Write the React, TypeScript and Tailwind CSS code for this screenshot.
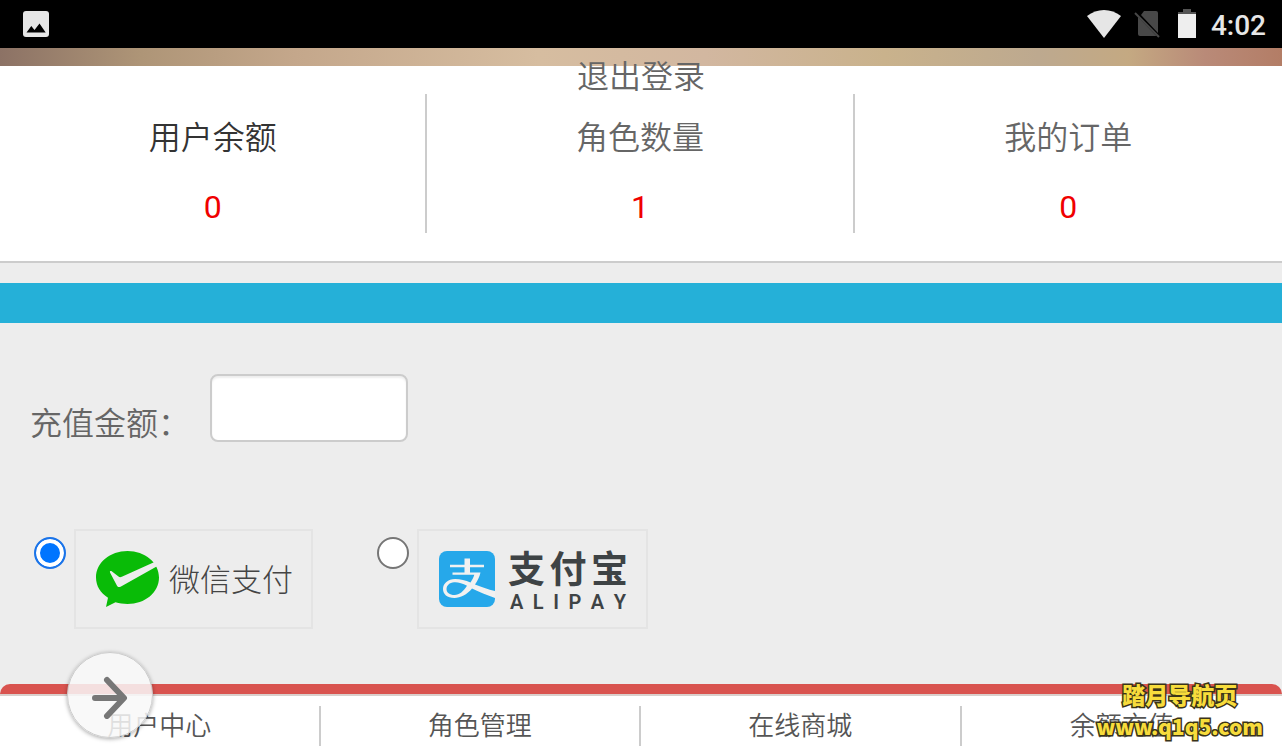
import { useState } from "react";

const STATS = [
  { label: "用户余额", value: 0, active: true },
  { label: "角色数量", value: 1, active: false },
  { label: "我的订单", value: 0, active: false },
];

const TABS = ["用户中心", "角色管理", "在线商城", "余额充值"];

function StatusBar() {
  return (
    <header className="flex h-12 items-center bg-black pr-4 pl-[23px] text-[#e6e6e6]">
      <svg className="h-[26px] w-[26px]" viewBox="0 0 26 26" aria-hidden="true">
        <rect width="26" height="26" rx="3" fill="#e6e6e6" />
        <path d="M3.500 21.500 8.300 15l3.200 4 5-6.500 6.200 9z" fill="#000" />
      </svg>
      <div className="ml-auto flex items-center">
        <svg className="h-7 w-[34px]" viewBox="0 0 34 28" aria-hidden="true">
          <path d="M17 28 0 6C10-2 24-2 34 6z" fill="#e6e6e6" />
        </svg>
        <svg className="ml-[13px] h-7 w-[26px]" viewBox="0 0 26 28" aria-hidden="true">
          <path d="M10 1h12a2 2 0 0 1 2 2v20L7 5zM4 7l18.500 19H6a2 2 0 0 1-2-2z" fill="#484848" />
          <path d="m1 3 24 24" stroke="#484848" strokeWidth="2" />
        </svg>
        <svg className="ml-[17px] h-[30px] w-5" viewBox="0 0 20 30" aria-hidden="true">
          <path d="M6 0h8v3h5v3H1V3h5z" fill="#545454" />
          <path d="M1 5h18v24H1z" fill="#eee" />
        </svg>
        <span className="ml-[14px] pt-1 text-[28px] leading-[44px] font-medium">4:02</span>
      </div>
    </header>
  );
}

function Stats() {
  return (
    <section className="grid grid-cols-3 border-b-2 border-[#ccc] bg-white py-7 text-center text-[32px] leading-[48px]">
      {STATS.map((s) => (
        <div
          key={s.label}
          className="flex flex-col gap-[21px] border-r-2 border-[#ccc] pt-5 pb-[2px] last:border-r-0"
        >
          <span className={s.active ? "font-[350] text-[#333]" : "font-[350] text-[#666]"}>{s.label}</span>
          <span className="text-[#f00000]">{s.value}</span>
        </div>
      ))}
    </section>
  );
}

function WechatLogo() {
  return (
    <span className="flex items-end gap-[10px]">
      <svg className="h-14 w-[63px]" viewBox="0 0 63 56" aria-hidden="true">
        <path
          d="M31.500 0C14 0 0 11.500 0 26.500c0 8.500 4.500 15.500 12 20.200L10 56l9.500-4.700c3.800 1.200 7.800 1.700 12 1.700C49 53 63 41.500 63 26.500S49 0 31.500 0z"
          fill="#09bb07"
        />
        <path
          d="M14 21.500c-.5-1.500.8-1.800 2-1l6.500 5c1 .8 2 .8 3.300.3L58.500 11l3 4L25 35.500c-1.800 1-3.300.7-4-.8z"
          fill="#ededed"
        />
      </svg>
      <span className="text-[31px] leading-[52px] font-light text-[#444]">微信支付</span>
    </span>
  );
}

function AlipayLogo() {
  return (
    <span className="flex items-center gap-[13px]">
      <svg className="h-14 w-14" viewBox="0 0 56 56" aria-hidden="true">
        <rect width="56" height="56" rx="8" fill="#26a8ea" />
        <path d="M25.500 7.500h5.500v6.300h14v2.400H31v5.300h10.500c-1 4.300-3 8.300-5.500 12 6 2.600 13 4.800 20 6.500V47c-8-2.800-16-6.300-23-9.500C28 43.500 21.500 47 15.500 47 8 47 4 43 4 38c0-5.500 5-10 12-10 5.500 0 10.500 1.500 15.500 3.500 1.700-2.500 3-5 3.800-7.700H13.500v-2.300h12v-5.300H11v-2.400h14.500z" fill="#f1f1f1" />
        <path d="M28 34.800c-4.500-2.300-9-3.800-12.800-3.500-4.800.4-7.700 3.200-7.700 6.700 0 3.600 3 6 8 6 4.800 0 9-3.600 12.500-9.200z" fill="#26a8ea" />
      </svg>
      <span className="flex w-[120px] flex-col pt-1 text-[#3e4345]">
        <span aria-label="支付宝" className="flex justify-between text-[37px] leading-[42px] font-bold">
          {Array.from("支付宝").map((c) => (
            <span key={c}>{c}</span>
          ))}
        </span>
        <span aria-label="ALIPAY" className="flex justify-between px-[2px] text-[20px] leading-5 font-semibold">
          {Array.from("ALIPAY").map((c, i) => (
            <span key={i}>{c}</span>
          ))}
        </span>
      </span>
    </span>
  );
}

const METHODS = [
  { id: "wechat", logo: <WechatLogo /> },
  { id: "alipay", logo: <AlipayLogo /> },
];

function RechargeForm() {
  const [amount, setAmount] = useState("");
  const [method, setMethod] = useState("wechat");

  return (
    <form className="px-[30px] pt-[51px] pb-12">
      <div className="flex items-end gap-5">
        <label htmlFor="amount" className="text-[32px] leading-9 font-[350] text-[#666]">
          充值金额：
        </label>
        <input
          id="amount"
          inputMode="decimal"
          value={amount}
          onChange={(e) => setAmount(e.target.value)}
          className="h-[68px] w-[198px] rounded-lg border-2 border-[#ccc] bg-white px-4 text-[32px] text-[#555] shadow-[inset_0_2px_2px_rgba(0,0,0,0.07)] outline-none"
        />
      </div>
      <div className="mt-[87px] flex flex-wrap gap-16 pl-1">
        {METHODS.map((m) => (
          <label key={m.id} className="flex items-start gap-2">
            <input
              type="radio"
              name="method"
              aria-label={m.id}
              checked={method === m.id}
              onChange={() => setMethod(m.id)}
              className="mt-2 h-8 w-8 appearance-none rounded-full border-2 border-[#767676] bg-white checked:border-[#1a73e8] checked:bg-[#0075ff] checked:shadow-[inset_0_0_0_4px_white]"
            />
            <span className="flex h-[100px] items-center border-2 border-[#e4e4e4] pr-[18px] pl-5">{m.logo}</span>
          </label>
        ))}
      </div>
    </form>
  );
}

function TabBar() {
  return (
    <div className="mt-auto">
      <div className="h-[10px] rounded-t-[10px] bg-[#d9534f]" />
      <nav className="grid grid-cols-4 border-t-2 border-[#d9cfcc] bg-white py-[10px]">
        {TABS.map((t) => (
          <a
            key={t}
            href="#"
            className="border-r-2 border-[#ccc] text-center text-[26px] leading-10 font-[350] text-[#555] last:border-r-0"
          >
            {t}
          </a>
        ))}
      </nav>
    </div>
  );
}

export default function App() {
  return (
    <div className="relative flex min-h-screen flex-col overflow-hidden bg-[#ededed] font-['Roboto','Noto_Sans_CJK_SC',sans-serif]">
      <StatusBar />
      <div className="relative h-[18px] bg-[linear-gradient(90deg,#8c7265_0%,#ae9577_11%,#c4a78b_23%,#d6bda0_42%,#d2b7a0_55%,#c9b28c_69%,#bda98f_81%,#c4a982_88%,#b98a78_94%,#b37d66_100%)]">
        <a
          href="#"
          className="absolute top-[5px] left-1/2 -translate-x-1/2 text-[32px] leading-[48px] font-[350] whitespace-nowrap text-[#666]"
        >
          退出登录
        </a>
      </div>
      <Stats />
      <div className="mt-5 h-10 bg-[#25b0d8]" />
      <RechargeForm />
      <TabBar />

      <button
        aria-label="前进"
        className="absolute bottom-[18px] left-[67px] flex h-[86px] w-[86px] items-center justify-center rounded-full border border-[#ccc] bg-[#f8f8f8]/85 shadow-[0_1px_4px_rgba(0,0,0,0.35)]"
      >
        <svg className="h-12 w-9" viewBox="0 0 36 48" aria-hidden="true">
          <path d="M3 27h28M15 9 32 27 15 45" fill="none" stroke="#777" strokeWidth="6" strokeLinecap="round" strokeLinejoin="round" />
        </svg>
      </button>

      <div className="pointer-events-none absolute right-[19px] bottom-[14px] text-center font-['Noto_Sans_CJK_SC',sans-serif] font-black text-[#f7dc3c] [-webkit-text-stroke:3px_#3a3418] [paint-order:stroke_fill]">
        <p className="text-[23px] leading-8">踏月导航页</p>
        <p className="text-[21px] leading-8">www.q1q5.com</p>
      </div>
    </div>
  );
}
